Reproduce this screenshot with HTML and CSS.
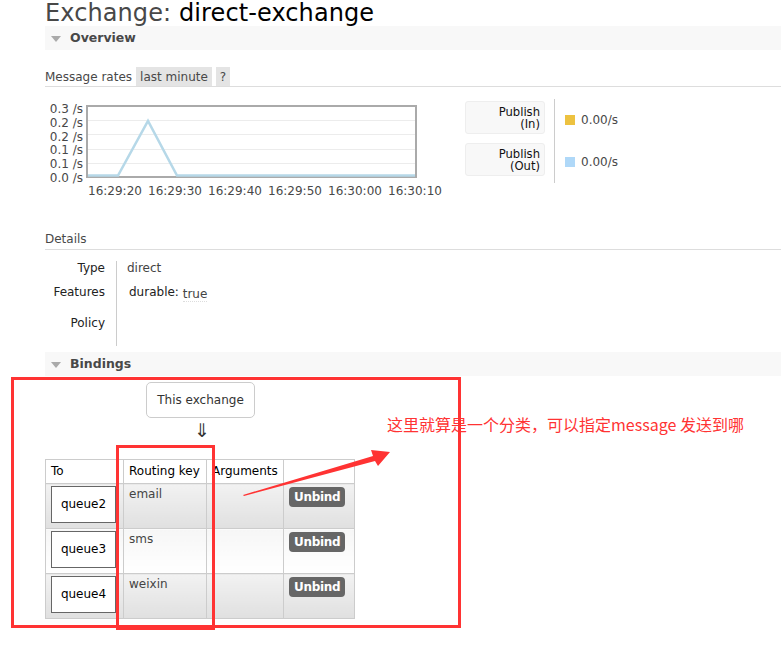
FILE: index.html
```html
<!DOCTYPE html>
<html>
<head>
<meta charset="utf-8">
<link rel="stylesheet" href="styles.css">
</head>
<body>
<div class="page">
  <h1 class="title"><span class="title-kind">Exchange:</span> direct-exchange</h1>

  <div class="section-bar"><span class="tri"></span>Overview</div>

  <div class="rates-head">
    <span>Message rates</span>
    <span class="pill">last minute</span>
    <span class="pill q">?</span>
  </div>

  <div class="rates">
    <div class="chart">
      <div class="chart-main">
        <div class="ylabels">
          <span>0.3 /s</span><span>0.2 /s</span><span>0.2 /s</span><span>0.1 /s</span><span>0.1 /s</span><span>0.0 /s</span>
        </div>
        <svg class="plot" width="331" height="73" viewBox="0 0 331 73">
          <rect x="1" y="1" width="329" height="71" fill="#fff" stroke="#aaa" stroke-width="2"/>
          <line x1="2" y1="15.5" x2="329" y2="15.5" stroke="#ececec"/>
          <line x1="2" y1="29.5" x2="329" y2="29.5" stroke="#ececec"/>
          <line x1="2" y1="44.5" x2="329" y2="44.5" stroke="#ececec"/>
          <line x1="2" y1="58.5" x2="329" y2="58.5" stroke="#ececec"/>
          <polyline points="2,70.5 32,70.5 62,16 91,70.5 329,70.5" fill="none" stroke="#b6d8e8" stroke-width="2.5"/>
        </svg>
      </div>
      <div class="xlabels">
        <span>16:29:20</span><span>16:29:30</span><span>16:29:40</span><span>16:29:50</span><span>16:30:00</span><span>16:30:10</span>
      </div>
    </div>
    <div class="legend-boxes">
      <div class="pub"><span>Publish</span><span>(In)</span></div>
      <div class="pub"><span>Publish</span><span>(Out)</span></div>
    </div>
    <div class="legend-vals">
      <div class="lv"><span class="sw sw-in"></span>0.00/s</div>
      <div class="lv"><span class="sw sw-out"></span>0.00/s</div>
    </div>
  </div>

  <div class="details-head">Details</div>
  <div class="details">
    <div class="dl">Type</div><div class="dv">direct</div>
    <div class="dl">Features</div><div class="dv feat">durable: <span class="true">true</span></div>
    <div class="dl">Policy</div><div class="dv"></div>
  </div>

  <div class="section-bar bindings-bar"><span class="tri"></span>Bindings</div>

  <div class="bindings">
    <div class="this-ex">This exchange</div>
    <div class="down">⇓</div>
    <table class="btable">
      <thead>
        <tr><th class="c1">To</th><th class="c2">Routing key</th><th class="c3">Arguments</th><th class="c4"></th></tr>
      </thead>
      <tbody>
        <tr class="alt"><td><span class="qbox">queue2</span></td><td>email</td><td></td><td><span class="unbind">Unbind</span></td></tr>
        <tr class="light"><td><span class="qbox">queue3</span></td><td>sms</td><td></td><td><span class="unbind">Unbind</span></td></tr>
        <tr class="alt"><td><span class="qbox">queue4</span></td><td>weixin</td><td></td><td><span class="unbind">Unbind</span></td></tr>
      </tbody>
    </table>
  </div>

  <div class="anno-box big"></div>
  <div class="anno-box col"></div>
  <svg class="anno-arrow" width="781" height="652" viewBox="0 0 781 652">
    <polygon points="243,495 373,456 371,450 390,452 378,466 375,461 244,496" fill="#f33"/>
  </svg>
  <div class="anno-text">这里就算是一个分类，可以指定message 发送到哪</div>
</div>
</body>
</html>
```

FILE: styles.css
```css
* { box-sizing: border-box; }
html, body { margin: 0; padding: 0; background: #fff; }
body {
  font-family: "DejaVu Sans", Verdana, sans-serif;
  font-size: 12px;
  color: #484848;
  width: 781px;
  height: 652px;
  overflow: hidden;
}
.page { position: relative; padding-left: 45px; }

.title {
  margin: 0;
  font-family: "DejaVu Sans", sans-serif;
  font-weight: normal;
  font-size: 24px;
  line-height: 26px;
  height: 26px;
  color: #000;
  letter-spacing: 0.1px;
}
.title-kind { color: #484848; }

.section-bar {
  background: #f8f8f8;
  height: 24px;
  line-height: 24px;
  font-weight: bold;
  font-size: 12.5px;
  color: #484848;
  padding-left: 25px;
  position: relative;
}
.tri {
  position: absolute;
  left: 6px;
  top: 10px;
  width: 0; height: 0;
  border-left: 5px solid transparent;
  border-right: 5px solid transparent;
  border-top: 6px solid #aaa;
}

.rates-head {
  margin-top: 17px;
  height: 19px;
  display: flex;
  align-items: stretch;
  border-bottom: 1px solid #ddd;
  box-sizing: content-box;
  line-height: 20px;
}
.rates-head .pill {
  background: #e4e4e4;
  margin-left: 4px;
  padding: 0 4px;
}
.rates-head .q { margin-left: 4px; padding: 0 4px; }

.rates { display: flex; margin-top: 16px; height: 98px; }
.chart { width: 410px; padding-top: 2px; }
.chart-main { display: flex; }
.ylabels {
  width: 41px;
  display: flex;
  flex-direction: column;
  align-items: flex-end;
  padding-right: 3px;
  margin-top: -2px;
  font-size: 12px;
}
.ylabels span { height: 13.8px; line-height: 13.8px; }
.plot { display: block; }
.xlabels { display: flex; padding-left: 43px; margin-top: -2px; }
.xlabels span { width: 60px; line-height: 14px; }

.legend-boxes {
  margin-left: 10px;
  width: 90px;
  padding-right: 10px;
  border-right: 1px solid #ccc;
  height: 84px;
  margin-top: -4px;
  padding-top: 2px;
}
.pub {
  width: 80px;
  height: 33px;
  background: #f8f8f8;
  border: 1px solid #eee;
  border-radius: 3px;
  display: flex;
  flex-direction: column;
  align-items: flex-end;
  justify-content: center;
  padding: 0 4px 0 0;
  line-height: 12px;
  font-size: 11.6px;
  color: #111;
  margin-bottom: 9px;
}
.pub span { height: 12px; }
.legend-vals { padding-left: 10px; padding-top: 0; }
.lv { display: flex; align-items: center; height: 33px; line-height: 14px; }
.lv + .lv { margin-top: 9px; }
.sw { width: 10px; height: 10px; margin-right: 6px; display: inline-block; }
.sw-in { background: #edc240; }
.sw-out { background: #afd8f8; }

.details-head {
  margin-top: 28px;
  height: 20px;
  line-height: 20px;
  border-bottom: 1px solid #ddd;
  box-sizing: content-box;
}
.details {
  display: grid;
  grid-template-columns: 72px auto;
  grid-template-rows: 24px 24px 37px;
  margin-top: 11px;
  margin-bottom: 6px;
  color: #222;
}
.dl {
  text-align: right;
  padding-right: 11px;
  border-right: 1px solid #ccc;
  line-height: 14px;
}
.dv { padding-left: 10px; line-height: 14px; color: #444; }
.details .dl:nth-child(5), .details .dv:nth-child(6) { padding-top: 7px; }
.feat { padding-left: 12px; color: #222; }
.true { color: #444; border-bottom: 1px dotted #ddd; position: relative; top: 2px; }

.bindings { position: relative; height: 260px; }
.this-ex {
  margin-left: 101px;
  margin-top: 6px;
  width: 109px;
  height: 36px;
  border: 1px solid #ccc;
  border-radius: 5px;
  line-height: 34px;
  text-align: center;
  color: #333;
}
.down {
  margin-left: 149px;
  font-size: 19px;
  line-height: 24px;
  height: 25px;
  color: #333;
}
.btable {
  margin-top: 16px;
  border-collapse: collapse;
  border: 1px solid #ccc;
}
.btable th, .btable td {
  border: 1px solid #ccc;
  padding: 0 5px;
  text-align: left;
  vertical-align: top;
}
.btable th {
  font-weight: normal;
  color: #000;
  height: 24px;
  line-height: 23px;
  background: #fff;
}
.c1 { width: 78px; }
.c2 { width: 83px; }
.c3 { width: 77px; }
.c4 { width: 71px; }
.btable td { height: 45px; color: #444; padding-top: 3px; line-height: 14px; }
.btable tr.alt td { background: linear-gradient(#f2f2f2, #e0e0e0); }
.btable tr.light td { background: linear-gradient(#f6f6f6, #ffffff); }
.btable td:first-child { padding: 2px 0 0 5px; }
.qbox {
  display: block;
  width: 65px;
  height: 37px;
  border: 1px solid #666;
  background: #fff;
  color: #000;
  line-height: 35px;
  text-align: center;
  position: relative;
  z-index: 1;
}
.unbind {
  display: inline-block;
  background: #666;
  color: #fff;
  font-weight: bold;
  border-radius: 4px;
  padding: 0 5px;
  height: 20px;
  line-height: 20px;
  font-size: 12px;
  letter-spacing: -0.3px;
}

.anno-box { position: absolute; border: 3px solid #f33; pointer-events: none; z-index: 5; }
.anno-box.big { left: 11px; top: 377px; width: 450px; height: 251px; }
.anno-box.col { left: 116px; top: 445px; width: 99px; height: 185px; }
.anno-arrow { position: absolute; left: 0; top: 0; z-index: 6; }
.anno-text {
  position: absolute;
  left: 387px;
  top: 413px;
  color: #f33;
  font-family: "Noto Sans CJK SC", "DejaVu Sans", sans-serif;
  font-size: 16px;
  line-height: 22px;
  white-space: nowrap;
  z-index: 6;
}
```
